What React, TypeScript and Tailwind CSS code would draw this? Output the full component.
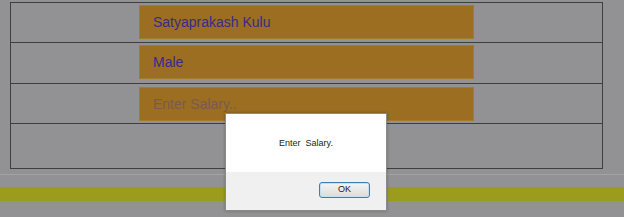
import React from "react";

const rows = [
	{ value: "Satyaprakash Kulu", placeholder: "" },
	{ value: "Male", placeholder: "" },
	{ value: "", placeholder: "Enter Salary.." },
];

const App = () => {
	return (
		<div
			className="relative h-[217px] w-[624px] overflow-hidden bg-[#929294]"
			style={{ fontFamily: '"Liberation Sans", Arial, sans-serif' }}
		>
			{/* form table, dimmed behind the alert */}
			<div className="ml-[10px] mt-[2px] w-[593px] border border-[#3e3e40]">
				<div className="flex h-[40px] items-start border-b border-[#3e3e40] pl-[128px] pt-[2px]">
					<Field value={rows[0].value} />
				</div>
				<div className="flex h-[41px] items-start border-b border-[#3e3e40] pl-[128px] pt-[2px]">
					<Field value={rows[1].value} />
				</div>
				<div className="flex h-[40px] items-start border-b border-[#3e3e40] pl-[128px] pt-[3px]">
					<Field value="" placeholder={rows[2].placeholder} />
				</div>
				<div className="h-[44px]" />
			</div>

			<div className="mt-[5px] h-px bg-[#a2a2a4]" />
			<div className="mt-[12px] h-[14px] bg-[#9b9c1e]" />

			{/* alert box */}
			<div className="absolute left-[225px] top-[113px] flex h-[98px] w-[162px] flex-col border border-[#8a8a8a] bg-white shadow-[0_0_3px_rgba(0,0,0,0.25)]">
				<div className="flex h-[58px] items-center justify-center pt-[2px] text-[9px] text-[#222] whitespace-pre">
					{"Enter  Salary."}
				</div>
				<div className="flex flex-1 items-start justify-end bg-[#f0f0f0] pr-[16px] pt-[10px]">
					<button className="flex h-[16px] w-[51px] items-center justify-center rounded-[3px] border border-[#3c7fb1] bg-gradient-to-b from-[#f4f4f4] to-[#dcdcdc] text-[9px] text-[#222] shadow-[inset_0_0_0_1px_#bfe1f5]">
						OK
					</button>
				</div>
			</div>
		</div>
	);
};

const Field = ({ value, placeholder }: { value: string; placeholder?: string }) => (
	<input
		readOnly
		value={value}
		placeholder={placeholder}
		className="h-[34px] w-[335px] border border-[#a67a2c] bg-[#9b6e22] pl-[13px] text-[14px] text-[#3a2a8c] outline-none placeholder:text-[#7a5b4a]"
		style={{ fontFamily: '"Liberation Sans", Arial, sans-serif' }}
	/>
);

export default App;
